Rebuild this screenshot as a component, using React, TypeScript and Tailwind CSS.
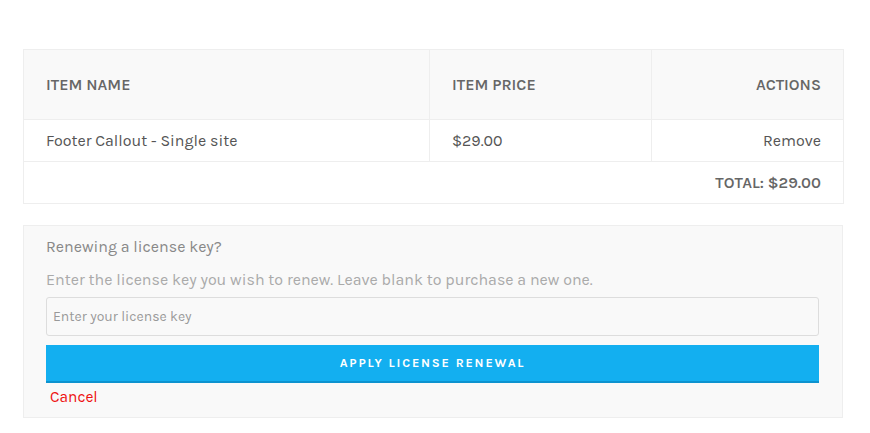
import React from "react";

export default function App() {
  const font = { fontFamily: "Karla, 'Open Sans', 'Noto Sans', sans-serif" };
  return (
    <div className="w-[870px] h-[433px] bg-white" style={font}>
      <div className="pl-[23px] pr-[26px] pt-[49px]">
        <table className="w-full border-collapse border border-[#eeeeee] text-[16px] text-[#555]">
          <thead>
            <tr className="bg-[#f9f9f9] h-[70px]">
              <th className="w-[406px] text-left font-semibold text-[#666] px-[22px] pt-[1px] border-r border-[#eeeeee]">ITEM NAME</th>
              <th className="w-[222px] text-left font-semibold text-[#666] px-[22px] pt-[1px] border-r border-[#eeeeee]">ITEM PRICE</th>
              <th className="text-right font-semibold text-[#666] px-[22px] pt-[1px]">ACTIONS</th>
            </tr>
          </thead>
          <tbody>
            <tr className="h-[42px] border-t border-[#eeeeee]">
              <td className="px-[22px] border-r border-[#eeeeee]">Footer Callout - Single site</td>
              <td className="px-[22px] border-r border-[#eeeeee]">$29.00</td>
              <td className="px-[22px] text-right">Remove</td>
            </tr>
            <tr className="h-[42px] border-t border-[#eeeeee]">
              <td colSpan={3} className="px-[22px] text-right font-semibold text-[#666]">TOTAL: $29.00</td>
            </tr>
          </tbody>
        </table>
        <div className="mt-[21px] w-[820px] border border-[#eeeeee] bg-[#f9f9f9] pl-[22px] pr-[23px] pt-[11px] pb-[10px]">
          <p className="text-[16px] text-[#888] leading-[20px]">Renewing a license key?</p>
          <p className="text-[16px] text-[#aaa] leading-[20px] mt-[13px]">Enter the license key you wish to renew. Leave blank to purchase a new one.</p>
          <input
            className="mt-[7px] block w-full h-[39px] border border-[#dddddd] rounded-[3px] bg-[#f9f9f9] px-[6px] text-[14px] text-[#555] placeholder-[#999] outline-none"
            style={font}
            placeholder="Enter your license key"
          />
          <button
            className="mt-[9px] block w-full h-[38px] bg-[#13aff0] border-b-2 border-[#0d93cf] text-white text-[12.5px] font-bold tracking-[1.8px] uppercase pt-[1px]"
            style={font}
          >
            Apply License Renewal
          </button>
          <div className="mt-[4px] pl-[4px] text-[15.5px] leading-[20px] text-[#e11]">Cancel</div>
        </div>
      </div>
    </div>
  );
}
